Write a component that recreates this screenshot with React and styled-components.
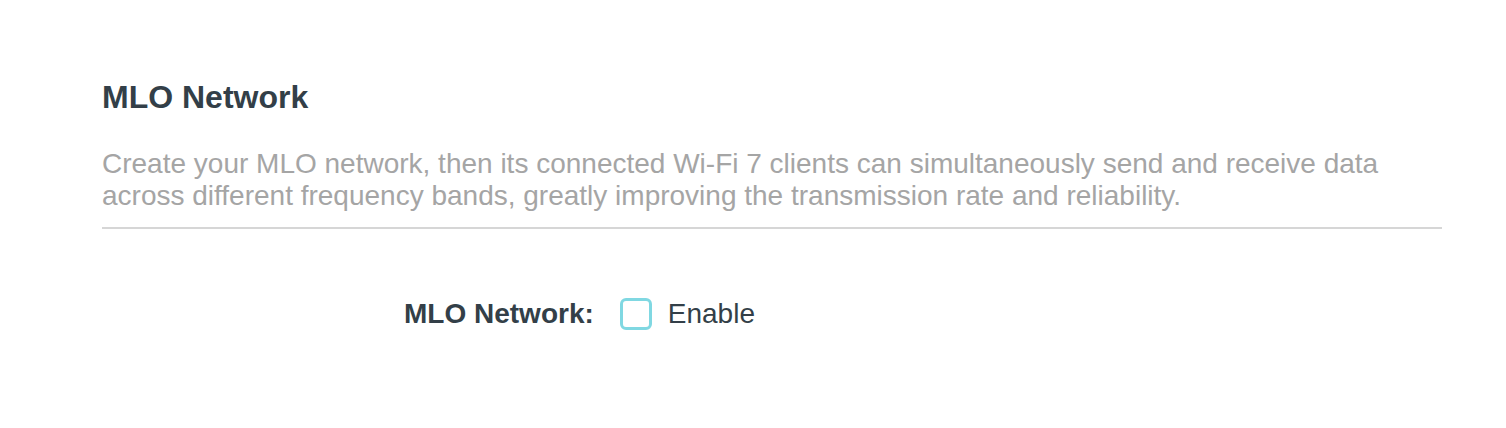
import styled, { createGlobalStyle } from "styled-components";

const GlobalStyle = createGlobalStyle`
  body {
    margin: 0;
    background: #fff;
    font-family: "Liberation Sans", Arial, sans-serif;
  }
`;

const Page = styled.div`
  padding: 77px 64px 0 102px;
`;

const Title = styled.h2`
  margin: 0;
  font-size: 32px;
  font-weight: 700;
  color: #333f48;
  line-height: 40px;
`;

const Description = styled.p`
  margin: 31px 0 0;
  font-size: 28px;
  line-height: 32px;
  color: #a5a5a5;
`;

const Divider = styled.hr`
  margin: 15px 0 0;
  border: 0;
  height: 2px;
  background: #d6d6d6;
`;

const Row = styled.div`
  display: flex;
  align-items: center;
  margin-top: 69px;
  padding-left: 302px;
`;

const Label = styled.span`
  font-size: 28px;
  font-weight: 700;
  color: #333f48;
  margin-right: 26px;
`;

const CheckBox = styled.span`
  box-sizing: border-box;
  width: 32px;
  height: 32px;
  border: 3px solid #80d8e2;
  border-radius: 6px;
  margin-right: 16px;
`;

const CheckText = styled.span`
  font-size: 28px;
  color: #333f48;
`;

export default function App() {
  return (
    <Page>
      <GlobalStyle />
      <Title>MLO Network</Title>
      <Description>
        Create your MLO network, then its connected Wi-Fi 7 clients can
        simultaneously send and receive data across different frequency bands,
        greatly improving the transmission rate and reliability.
      </Description>
      <Divider />
      <Row>
        <Label>MLO Network:</Label>
        <CheckBox />
        <CheckText>Enable</CheckText>
      </Row>
    </Page>
  );
}
